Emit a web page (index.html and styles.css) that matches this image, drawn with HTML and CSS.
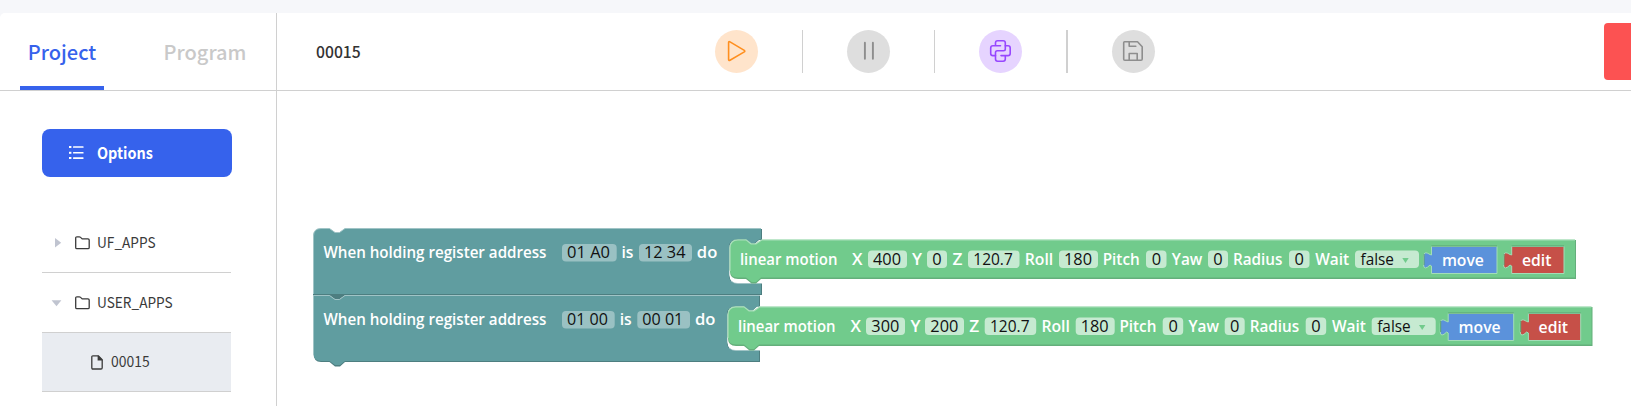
FILE: index.html
```html
<!DOCTYPE html>
<html lang="en">
<head>
<meta charset="utf-8">
<title>Project editor</title>
<link rel="stylesheet" href="styles.css">
</head>
<body>
<div class="app">
  <aside class="sidebar">
    <nav class="tabs">
      <div class="tab tab-active">Project</div>
      <div class="tab">Program</div>
    </nav>
    <div class="side-body">
      <div class="options">
        <svg class="list-icon" width="15" height="14" viewBox="0 0 15 14"><g fill="#fff"><rect x="0" y="0" width="2.4" height="2" /><rect x="4" y="0.2" width="10.6" height="1.6" rx=".6"/><rect x="0" y="5.8" width="2.4" height="2"/><rect x="4" y="6" width="10.6" height="1.5" rx=".6"/><rect x="0" y="11" width="2.4" height="2"/><rect x="4" y="11.3" width="10.6" height="1.6" rx=".6"/></g></svg>
        <span class="options-label">Options</span>
      </div>
      <div class="tree">
        <div class="row">
          <svg class="caret" width="12" height="10" viewBox="0 0 12 10"><path d="M4 0L10.2 4.8L4 9.6Z"/></svg>
          <svg class="folder" width="15" height="14" viewBox="0 0 15 14"><path d="M.7 2V11.4Q.7 12.6 1.9 12.6H13Q14.2 12.6 14.2 11.4V4Q14.2 2.9 13 2.9H7.2L5.6 1.4Q5 .8 4.2 .8H1.9Q.7 .8 .7 2Z"/></svg>
          <span class="label">UF_APPS</span>
        </div>
        <div class="row">
          <svg class="caret" width="12" height="10" viewBox="0 0 12 10"><path d="M.6 2.2H10.4L5.5 8.2Z"/></svg>
          <svg class="folder" width="15" height="14" viewBox="0 0 15 14"><path d="M.7 2V11.4Q.7 12.6 1.9 12.6H13Q14.2 12.6 14.2 11.4V4Q14.2 2.9 13 2.9H7.2L5.6 1.4Q5 .8 4.2 .8H1.9Q.7 .8 .7 2Z"/></svg>
          <span class="label">USER_APPS</span>
        </div>
        <div class="row row-file">
          <svg class="file" width="12" height="15" viewBox="0 0 12 15"><path d="M1.9 .8H7.4L11.2 4.8V12.8Q11.2 14 10 14H1.9Q.8 14 .8 12.8V2Q.8 .8 1.9 .8Z" fill="none" stroke="#3a3a3a" stroke-width="1.3"/><path d="M6.6 .8H7.6L11.5 4.9V5.5H6.6Z" fill="#3a3a3a"/></svg>
          <span class="label">00015</span>
        </div>
      </div>
    </div>
  </aside>
  <main class="main">
    <header class="toolbar">
      <div class="title">00015</div>
      <div class="tools">
        <div class="tool play"><svg width="43" height="43" viewBox="0 0 43 43"><path d="M13.6 12.6V29.4Q13.6 30.9 15 30.2L29.3 21.9Q30.3 21.2 29.3 20.4L15 11.9Q13.6 11.2 13.6 12.6Z" stroke="#ff8f1f"/></svg></div>
        <i class="sep"></i>
        <div class="tool gray"><svg width="43" height="43" viewBox="0 0 43 43"><path d="M17.9 12.8V28.8M25.9 12.8V28.8" stroke="#8e8e8e" stroke-width="1.9"/></svg></div>
        <i class="sep"></i>
        <div class="tool py"><svg width="43" height="43" viewBox="0 0 43 43"><g stroke="#9747ff"><path d="M21.5 15.8H13.9Q11.7 15.8 11.7 18V23.5Q11.7 25.6 13.9 25.6H16.5V22.5Q16.5 20.7 18.3 20.7H24.5Q26.3 20.7 26.3 19V12.8Q26.3 10.7 24.1 10.7H18.6Q16.5 10.7 16.5 12.8V15.8"/><path d="M22 25.6H29Q31.2 25.6 31.2 23.5V18Q31.2 15.8 29 15.8H26.3M16.5 25.6V29Q16.5 31.2 18.6 31.2H24.1Q26.3 31.2 26.3 29V25.6"/></g></svg></div>
        <i class="sep sep-wide"></i>
        <div class="tool gray"><svg width="43" height="43" viewBox="0 0 43 43"><path d="M12.6 11.8H25.5L30.2 16.7V29Q30.2 30.3 29 30.3H12.8Q11.7 30.3 11.7 29V12.8Q11.7 11.8 12.6 11.8ZM17.2 12V16.2H23.8M17.2 30V23.5H25.2V30" stroke="#8e8e8e"/></svg></div>
      </div>
      <div class="stop"></div>
    </header>
    <svg class="canvas" width="1354" height="315" viewBox="277 91 1354 315">
      <g class="event">
        <path class="dark" d="M322 229H329.5L335 233H339.5L345 229H762V240H759L754.5 244H750.5L746 240H738Q729.500 240 729.500 248V275Q729.500 283.500 738 283.500H762V295H345L339.500 299H335L329.500 295H313.500V237Q313.500 229 322 229Z"/>
        <path class="fill" d="M321 228.500H329.500L335 232.500H339.500L345 228.500H761V239.500H759L754 243.500H750L745 239.500H737Q729 239.500 729 247V275Q729 283.500 737 283.500H761V294H313.500V236Q313.500 228.500 321 228.500Z"/>
        <path class="light" d="M313.500 294V236Q313.500 228.500 321 228.500H329.500L335 232.500H339.500L345 228.500H761M731 281Q734 283.500 738 283.500H761"/>
        <path class="dark" d="M313.500 295.500H329.500L335 299.500H339.500L345 295.500H760V306.500H757L752.500 310.500H748.500L744 306.500H736Q727.500 306.500 727.500 315V342Q727.500 350.500 736 350.500H760V362H345L340 366.500H335L329.500 362H321Q313.500 362 313.500 353Z"/>
        <path class="fill" d="M313.500 295.500H329.500L335 299.500H339.500L345 295.500H759V306.500H757L752.500 310.500H748.500L744 306.500H735Q727 306.500 727 314V342Q727 350.500 735 350.500H759V361H345L340 365H335L329.500 361H321Q313.500 361 313.500 353Z"/>
        <path class="edge" d="M313 294.500H329.500L335 298.500H339.500L345 294.500H761.500"/>
        <path class="light" d="M313.500 354V295.500H329.500L335 299.500H339.500L345 295.500H759M729 348Q732 350.500 736 350.500H759"/>
        <path class="white" d="M729.500 270V275Q730 282.800 738 282.800H762V278H740Z"/>
        <path class="white" d="M727.500 337V342Q728 349.800 736 349.800H760V345H738Z"/>
      </g>
      <g class="motion">
        <path class="gdark" d="M738 240H746L751 244H756L762 240H1576V279H761L756 283.500H751.500L746 279H738Q730 279 730 271V248Q730 240 738 240Z"/>
        <path class="gfill" d="M738 240H746L751 244H756L762 240H1575V277.500H761L756 282H751.500L746 277.500H738Q730 277.500 730 270V248Q730 240 738 240Z"/>
        <path class="glight" d="M730 271V248Q730 239.800 738 239.800H746L751 243.800H756L762 239.800H1575"/>
        <path class="gdark" d="M736 307H744L749 311H754L760 307H1592.500V346H759L754 350.500H749.500L744 346H736Q728 346 728 338V315Q728 307 736 307Z"/>
        <path class="gfill" d="M736 307H744L749 311H754L760 307H1591.500V344.500H759L754 349H749.500L744 344.500H736Q728 344.500 728 337V315Q728 307 736 307Z"/>
        <path class="glight" d="M728 338V315Q728 306.800 736 306.800H744L749 310.800H754L760 306.800H1591.500"/>
      </g>

      <g class="field field-event">
        <rect x="562" y="244" width="54.700" height="17.500" rx="4"/><rect x="639" y="244" width="53" height="17.500" rx="4"/>
        <rect x="562" y="311" width="52.700" height="17.500" rx="4"/><rect x="637.300" y="311" width="52.700" height="17.500" rx="4"/>
      </g>
      <g class="lab">
        <text x="323.500" y="258.300" textLength="223" lengthAdjust="spacingAndGlyphs">When holding register address</text>
        <text x="621.500" y="258.300" textLength="12" lengthAdjust="spacingAndGlyphs">is</text>
        <text x="696.800" y="258.300" textLength="20.500" lengthAdjust="spacingAndGlyphs">do</text>
        <text x="323.500" y="325.300" textLength="223" lengthAdjust="spacingAndGlyphs">When holding register address</text>
        <text x="619.700" y="325.300" textLength="12" lengthAdjust="spacingAndGlyphs">is</text>
        <text x="695" y="325.300" textLength="20.500" lengthAdjust="spacingAndGlyphs">do</text>
      </g>
      <g class="val">
        <text x="567" y="258.300" textLength="43" lengthAdjust="spacingAndGlyphs">01 A0</text>
        <text x="644" y="258.300" textLength="41.500" lengthAdjust="spacingAndGlyphs">12 34</text>
        <text x="567" y="325.300" textLength="41" lengthAdjust="spacingAndGlyphs">01 00</text>
        <text x="642.300" y="325.300" textLength="41" lengthAdjust="spacingAndGlyphs">00 01</text>
      </g>

      <g class="field"><rect x="868" y="250.500" width="39" height="17.500" rx="4"/><rect x="927" y="250.500" width="20" height="17.500" rx="4"/><rect x="866" y="317.500" width="39" height="17.500" rx="4"/><rect x="925" y="317.500" width="39" height="17.500" rx="4"/></g>
      <g class="lab">
        <text x="739.900" y="265" textLength="97.500" lengthAdjust="spacingAndGlyphs">linear motion</text>
        <text x="852" y="265" textLength="10.500" lengthAdjust="spacingAndGlyphs">X</text>
        <text x="912" y="265" textLength="10" lengthAdjust="spacingAndGlyphs">Y</text>
        <text x="738" y="332" textLength="97.500" lengthAdjust="spacingAndGlyphs">linear motion</text>
        <text x="850.500" y="332" textLength="10.500" lengthAdjust="spacingAndGlyphs">X</text>
        <text x="910.500" y="332" textLength="10" lengthAdjust="spacingAndGlyphs">Y</text>
      </g>
      <g class="val">
        <text x="873" y="265" textLength="28" lengthAdjust="spacingAndGlyphs">400</text>
        <text x="932.300" y="265" textLength="9.400" lengthAdjust="spacingAndGlyphs">0</text>
        <text x="871.300" y="332" textLength="28" lengthAdjust="spacingAndGlyphs">300</text>
        <text x="930.300" y="332" textLength="28" lengthAdjust="spacingAndGlyphs">200</text>
      </g>

      <g class="tail">
        <g class="field"><rect x="968" y="250.500" width="51.500" height="17.500" rx="4"/><rect x="1059" y="250.500" width="39" height="17.500" rx="4"/><rect x="1146" y="250.500" width="20.500" height="17.500" rx="4"/><rect x="1208" y="250.500" width="20" height="17.500" rx="4"/><rect x="1289" y="250.500" width="20.500" height="17.500" rx="4"/><rect x="1355" y="250.500" width="64" height="17.500" rx="4"/></g>
        <g class="lab">
          <text x="952.500" y="265" textLength="10" lengthAdjust="spacingAndGlyphs">Z</text>
          <text x="1024.700" y="265" textLength="28.500" lengthAdjust="spacingAndGlyphs">Roll</text>
          <text x="1102.700" y="265" textLength="37" lengthAdjust="spacingAndGlyphs">Pitch</text>
          <text x="1171.800" y="265" textLength="30.500" lengthAdjust="spacingAndGlyphs">Yaw</text>
          <text x="1233" y="265" textLength="49.500" lengthAdjust="spacingAndGlyphs">Radius</text>
          <text x="1315.200" y="265" textLength="34" lengthAdjust="spacingAndGlyphs">Wait</text>
        </g>
        <g class="val">
          <text x="973.300" y="265" textLength="39.500" lengthAdjust="spacingAndGlyphs">120.7</text>
          <text x="1064" y="265" textLength="28" lengthAdjust="spacingAndGlyphs">180</text>
          <text x="1151.700" y="265" textLength="9.400" lengthAdjust="spacingAndGlyphs">0</text>
          <text x="1213.300" y="265" textLength="9.400" lengthAdjust="spacingAndGlyphs">0</text>
          <text x="1294.600" y="265" textLength="9.400" lengthAdjust="spacingAndGlyphs">0</text>
          <text x="1360.500" y="265" textLength="33.500" lengthAdjust="spacingAndGlyphs">false</text>
        </g>
        <path class="tri" d="M1402.300 258H1408.700L1405.500 263Z"/>
        <path class="move" d="M1431.500 246.500H1497V273.500H1431.500V266L1430 265Q1424 271 1423.500 265V257Q1423.500 250 1430 254.500L1431.500 255Z"/>
        <path class="edit" d="M1511.700 246.500H1564V273.500H1511.700V266L1510 265Q1504 271 1503.500 265V257Q1503.500 250 1510 254.500L1511.700 255Z"/>
        <path class="shade" d="M1431.500 246H1497M1511.700 246H1564M1424 254V265M1504 254V265"/>
        <g class="lab"><text x="1441.900" y="266" textLength="42" lengthAdjust="spacingAndGlyphs">move</text><text x="1521.900" y="266" textLength="29.500" lengthAdjust="spacingAndGlyphs">edit</text></g>
      </g>
      <g class="tail" transform="translate(16.700 67)">
        <g class="field"><rect x="968" y="250.500" width="51.500" height="17.500" rx="4"/><rect x="1059" y="250.500" width="39" height="17.500" rx="4"/><rect x="1146" y="250.500" width="20.500" height="17.500" rx="4"/><rect x="1208" y="250.500" width="20" height="17.500" rx="4"/><rect x="1289" y="250.500" width="20.500" height="17.500" rx="4"/><rect x="1355" y="250.500" width="64" height="17.500" rx="4"/></g>
        <g class="lab">
          <text x="952.500" y="265" textLength="10" lengthAdjust="spacingAndGlyphs">Z</text>
          <text x="1024.700" y="265" textLength="28.500" lengthAdjust="spacingAndGlyphs">Roll</text>
          <text x="1102.700" y="265" textLength="37" lengthAdjust="spacingAndGlyphs">Pitch</text>
          <text x="1171.800" y="265" textLength="30.500" lengthAdjust="spacingAndGlyphs">Yaw</text>
          <text x="1233" y="265" textLength="49.500" lengthAdjust="spacingAndGlyphs">Radius</text>
          <text x="1315.200" y="265" textLength="34" lengthAdjust="spacingAndGlyphs">Wait</text>
        </g>
        <g class="val">
          <text x="973.300" y="265" textLength="39.500" lengthAdjust="spacingAndGlyphs">120.7</text>
          <text x="1064" y="265" textLength="28" lengthAdjust="spacingAndGlyphs">180</text>
          <text x="1151.700" y="265" textLength="9.400" lengthAdjust="spacingAndGlyphs">0</text>
          <text x="1213.300" y="265" textLength="9.400" lengthAdjust="spacingAndGlyphs">0</text>
          <text x="1294.600" y="265" textLength="9.400" lengthAdjust="spacingAndGlyphs">0</text>
          <text x="1360.500" y="265" textLength="33.500" lengthAdjust="spacingAndGlyphs">false</text>
        </g>
        <path class="tri" d="M1402.300 258H1408.700L1405.500 263Z"/>
        <path class="move" d="M1431.500 246.500H1497V273.500H1431.500V266L1430 265Q1424 271 1423.500 265V257Q1423.500 250 1430 254.500L1431.500 255Z"/>
        <path class="edit" d="M1511.700 246.500H1564V273.500H1511.700V266L1510 265Q1504 271 1503.500 265V257Q1503.500 250 1510 254.500L1511.700 255Z"/>
        <path class="shade" d="M1431.500 246H1497M1511.700 246H1564M1424 254V265M1504 254V265"/>
        <g class="lab"><text x="1441.900" y="266" textLength="42" lengthAdjust="spacingAndGlyphs">move</text><text x="1521.900" y="266" textLength="29.500" lengthAdjust="spacingAndGlyphs">edit</text></g>
      </g>
    </svg>
  </main>
</div>
</body>
</html>
```
FILE: styles.css
```css
* { box-sizing: border-box; }
body {
  margin: 0;
  height: 406px;
  overflow: hidden;
  padding-top: 13px;
  background: #f6f7fa;
  color: #333;
  font-family: "Noto Sans CJK SC", sans-serif;
}
.app { display: flex; height: 393px; background: #fff; border-top-left-radius: 5px; }
.sidebar { width: 277px; flex: none; border-right: 1px solid #d0d0d0; }
.tabs {
  display: flex;
  height: 78px;
  padding-left: 20px;
  gap: 52px;
  border-bottom: 1px solid #d0d0d0;
}
.tab {
  height: 77px;
  width: 84px;
  line-height: 78px;
  text-align: center;
  white-space: nowrap;
  font-size: 20px;
  font-weight: 500;
  color: #c9c9c9;
}
.tab + .tab { width: 98px; }
.tab-active { color: #3662ec; border-bottom: 4px solid #3662ec; }
.side-body { padding: 38px 0 0 42px; }
.options {
  display: flex;
  align-items: center;
  width: 190px;
  height: 48px;
  padding-left: 27px;
  gap: 13px;
  border-radius: 8px;
  background: #3662ec;
  color: #fff;
  font-size: 16px;
  font-weight: 700;
}
.options-label { padding-bottom: 3px; transform: scaleX(.9); transform-origin: left; }
.tree { width: 189px; margin-top: 36px; }
.row {
  display: flex;
  align-items: center;
  height: 60px;
  padding-left: 9px;
  border-bottom: 1px solid #d0d0d0;
  font-size: 15px;
  color: #3a3a3a;
}
.label { padding-bottom: 2px; transform: scaleX(.91); transform-origin: left; }
.caret { fill: #c0c4d0; margin-right: 12px; }
.folder { fill: none; stroke: #3a3a3a; stroke-width: 1.300; margin-right: 7px; }
.row-file { height: 59px; background: #e9ecf1; padding-left: 49px; }
.row-file .label { padding-bottom: 4px; transform: scaleX(.93); }
.file { margin-right: 8px; }
.main { flex: 1; min-width: 0; }
.toolbar {
  display: flex;
  height: 78px;
  padding: 10px 0 0 39px;
  border-bottom: 1px solid #d0d0d0;
}
.title { width: 399px; line-height: 57px; font-size: 15.700px; font-weight: 500; }
.tools { display: flex; width: 440px; padding-top: 7px; }
.tool { width: 43px; height: 43px; border-radius: 50%; }
.tool svg { display: block; fill: none; stroke-width: 1.600; stroke-linecap: round; stroke-linejoin: round; }
.play { background: #ffe4cb; }
.gray { background: #dedede; }
.py { background: #e6d4ff; }
.sep { width: 1px; height: 43px; margin: 0 44px; background: #d0d0d0; }
.sep-wide { width: 2px; }
.stop { width: 27px; height: 57px; margin-left: auto; border-radius: 4px 0 0 4px; background: #fc5252; }
.canvas { display: block; }
.fill { fill: #609da0; }
.dark { fill: #4d7e80; }
.light { fill: none; stroke: #a0c4c6; stroke-width: 1; }
.edge { fill: none; stroke: #4d7e80; stroke-width: 1; }
.white { fill: #fff; }
.gfill { fill: #71cb8c; }
.gdark { fill: #64af7b; }
.glight { fill: none; stroke: #aae0ba; stroke-width: 1.200; }
.field rect { fill: #fff; fill-opacity: .6; }
.field-event rect { fill-opacity: .37; }
.lab, .val { font-family: "Open Sans", "Noto Sans", sans-serif; font-size: 15.500px; }
.lab { fill: #fff; font-weight: 600; }
.val { fill: #111; }
.tri { fill: #71cb8c; }
.move { fill: #5b92db; stroke: #a3ddb8; stroke-width: 1; }
.edit { fill: #c65048; stroke: #a3ddb8; stroke-width: 1; }
.shade { fill: none; stroke: #5aa270; stroke-width: 1; }
```
